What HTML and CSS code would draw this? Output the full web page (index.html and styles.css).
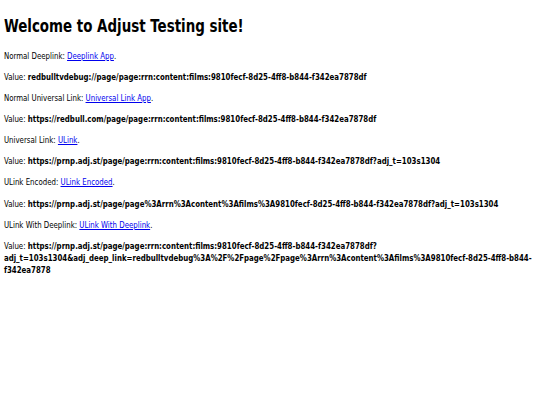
FILE: index.html
```html
<!DOCTYPE html>
<html>
<head>
<meta charset="utf-8">
<title>Adjust Testing</title>
<link rel="stylesheet" href="styles.css">
</head>
<body class="page">
<div class="frame">
<div class="sheet">
<h1 class="title">Welcome to Adjust Testing site!</h1>
<p class="row">Normal Deeplink: <a class="link" href="#">Deeplink App</a>.</p>
<p class="row">Value: <b class="val">redbulltvdebug://page/page:rrn:content:films:9810fecf-8d25-4ff8-b844-f342ea7878df</b></p>
<p class="row">Normal Universal Link: <a class="link" href="#">Universal Link App</a>.</p>
<p class="row">Value: <b class="val">https://redbull.com/page/page:rrn:content:films:9810fecf-8d25-4ff8-b844-f342ea7878df</b></p>
<p class="row">Universal Link: <a class="link" href="#">ULink</a>.</p>
<p class="row">Value: <b class="val">https://prnp.adj.st/page/page:rrn:content:films:9810fecf-8d25-4ff8-b844-f342ea7878df?adj_t=103s1304</b></p>
<p class="row">ULink Encoded: <a class="link" href="#">ULink Encoded</a>.</p>
<p class="row">Value: <b class="val">https://prnp.adj.st/page/page%3Arrn%3Acontent%3Afilms%3A9810fecf-8d25-4ff8-b844-f342ea7878df?adj_t=103s1304</b></p>
<p class="row">ULink With Deeplink: <a class="link" href="#">ULink With Deeplink</a>.</p>
<p class="row">Value: <b class="val">https://prnp.adj.st/page/page:rrn:content:films:9810fecf-8d25-4ff8-b844-f342ea7878df?adj_t=103s1304&amp;adj_deep_link=redbulltvdebug%3A%2F%2Fpage%2Fpage%3Arrn%3Acontent%3Afilms%3A9810fecf-8d25-4ff8-b844-f342ea7878</b></p>
</div>
</div>
</body>
</html>
```
FILE: styles.css
```css
html { background: #fff; overflow: hidden; }
.page {
  margin: 0;
  overflow: hidden;
  font-family: "DejaVu Sans", "Liberation Sans", sans-serif;
  font-size: 9px;
  line-height: 12px;
  color: #000;
}
.frame {
  width: 540px;
  overflow: hidden;
}
.sheet {
  width: 692px;
  box-sizing: border-box;
  padding: 0 5px;
  margin-right: -152px;
  transform: scaleX(0.78);
  transform-origin: 0 0;
}
.title {
  font-size: 17.2px;
  line-height: 21.3px;
  font-weight: bold;
  margin: 15.8px 0 12.8px;
}
.row {
  margin: 9.1px 0;
  word-wrap: break-word;
}
.val { font-weight: bold; }
.link { color: #0000ee; text-decoration: underline; }
```
